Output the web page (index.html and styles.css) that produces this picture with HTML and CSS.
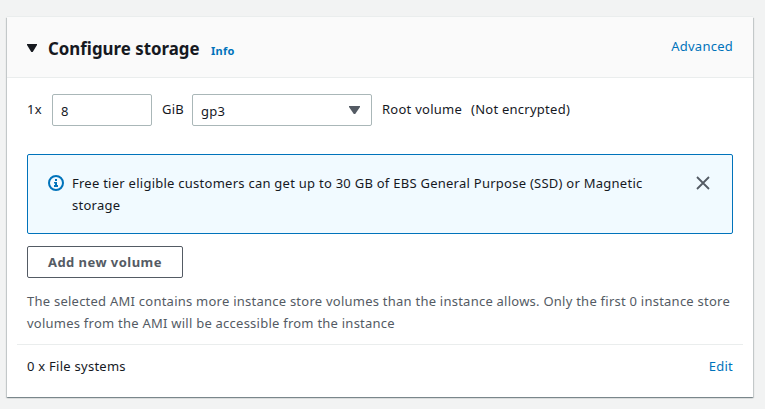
FILE: index.html
```html
<!DOCTYPE html>
<html lang="en">
<head>
<meta charset="utf-8">
<title>Configure storage</title>
<link rel="stylesheet" href="styles.css">
</head>
<body>
<section class="card">
  <header class="card-header">
    <svg class="caret" width="10" height="8" viewBox="0 0 10 8"><path d="M0 0h10v1L5.700 8H4.300L0 1z" fill="currentColor"/></svg>
    <h2 class="title">Configure storage</h2>
    <a class="info">Info</a>
    <a class="link advanced">Advanced</a>
  </header>
  <div class="volume">
    <span class="label count">1x</span>
    <div class="field size">8</div>
    <span class="label unit">GiB</span>
    <div class="field type">gp3
      <svg width="11" height="8" viewBox="0 0 11 8"><path d="M0 0h11v1L6.200 8H4.800L0 1z" fill="currentColor"/></svg>
    </div>
    <span class="label root">Root volume</span>
    <span class="label">(Not encrypted)</span>
  </div>
  <div class="alert">
    <svg class="info-icon" width="16" height="16" viewBox="0 0 16 16"><circle cx="8" cy="8" r="7" fill="none" stroke="currentColor" stroke-width="2"/><path d="M7 4h2v2H7zM6 7h3v3h1v2H6v-2h1V8.500H6z" fill="currentColor"/></svg>
    <p class="alert-text">Free tier eligible customers can get up to 30 GB of EBS General Purpose (SSD) or Magnetic<br>storage</p>
    <svg class="close" width="14" height="14" viewBox="0 0 14 14"><path d="M1 1l12 12M13 1L1 13" stroke="currentColor" stroke-width="1.800" fill="none"/></svg>
  </div>
  <button class="add">Add new volume</button>
  <p class="note">The selected AMI contains more instance store volumes than the instance allows. Only the first 0 instance store<br>volumes from the AMI will be accessible from the instance</p>
  <footer class="files">
    <span>0 x File systems</span>
    <a class="link">Edit</a>
  </footer>
</section>
</body>
</html>
```
FILE: styles.css
```css
* { box-sizing: border-box; }
body {
  margin: 0;
  padding: 17px 12px 12px 7px;
  height: 409px;
  overflow: hidden;
  background: #f2f3f3;
  color: #16191f;
  font: 13px/22px "Noto Sans", sans-serif;
  letter-spacing: .255px;
  white-space: nowrap;
}
h2, p { margin: 0; }
.card {
  height: 380px;
  background: #fff;
  box-shadow: 0 1px 1px 0 rgba(0, 28, 36, .3), 1px 1px 1px 0 rgba(0, 28, 36, .15), -1px 1px 1px 0 rgba(0, 28, 36, .15), 0 -1px 0 0 #eaeded;
}
.card-header {
  height: 61px;
  padding: 0 20px;
  display: flex;
  align-items: center;
  background: #fafafa;
  border-bottom: 1px solid #eaeded;
}
.caret { margin: 2px 11px 0 0; }
.title {
  width: 163px;
  margin-top: 2px;
  font-size: 18px;
  line-height: 22px;
  letter-spacing: 0;
  transform: scaleX(.937);
  transform-origin: left;
}
.info {
  margin-top: 7px;
  color: #0073bb;
  font-size: 11px;
  font-weight: 700;
}
.link { color: #0073bb; margin-left: auto; }
.advanced { margin-top: -2px; }
.volume {
  display: flex;
  align-items: center;
  height: 32px;
  margin: 16px 20px 28px;
}
.label { margin-top: -2px; }
.count { width: 25px; }
.field {
  height: 32px;
  border: 1px solid #aab7b8;
  border-radius: 2px;
  display: flex;
  align-items: center;
  justify-content: space-between;
  padding: 2px 11px 0 8px;
}
.field svg { color: #545b64; margin-top: -2px; }
.size { width: 100px; }
.unit { width: 40px; padding-left: 10px; }
.type { width: 180px; }
.root { width: 99px; padding-left: 10px; }
.alert {
  display: flex;
  margin: 0 20px;
  height: 80px;
  padding: 18px 22px 0 20px;
  border: 1px solid #0073bb;
  border-radius: 2px;
  background: #f1faff;
}
.alert-text { margin-top: -1px; }
.info-icon { color: #0073bb; margin: 2px 8px 0 0; }
.close { color: #545b64; margin: 3px 0 0 auto; }
.add {
  display: block;
  width: 156px;
  height: 32px;
  margin: 12px 20px;
  padding: 0 0 0 20px;
  border: 1px solid #545b64;
  border-radius: 2px;
  background: #fff;
  color: #545b64;
  font: 700 13px/22px "Noto Sans", sans-serif;
  letter-spacing: .45px;
  text-align: left;
}
.note { margin: 0 20px 10px; color: #545b64; letter-spacing: .24px; }
.files {
  display: flex;
  margin: 0 10px;
  padding: 10px 10px 0;
  border-top: 1px solid #eaeded;
}
```
